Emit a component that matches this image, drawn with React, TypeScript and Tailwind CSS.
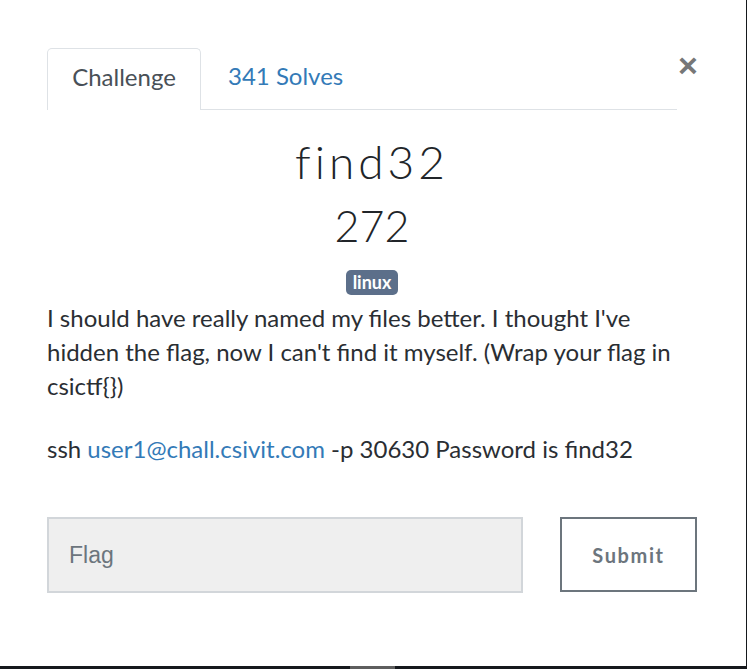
import React from "react";

export default function App() {
  return (
    <div className="w-[747px] h-[669px] bg-[#15181c] flex flex-col overflow-hidden" style={{ fontFamily: "Lato, 'Open Sans', sans-serif" }}>
      <div className="relative w-[746px] h-[666px] bg-white pl-[47px] pr-[49px] pt-[48px] text-[#212529]">
        <button className="absolute left-[678px] top-[50px] text-[34px] leading-[30px] font-bold text-[#777]" style={{ fontFamily: "'Liberation Sans', Arial, sans-serif" }}>
          ×
        </button>
        <div className="mr-[20px] flex border-b border-[#dee2e6] h-[62px]">
          <div className="w-[154px] h-[62px] pb-[6px] border border-b-0 border-[#dee2e6] rounded-t-[5px] bg-white flex items-center justify-center text-[24px] text-[#495057] -mb-px">
            Challenge
          </div>
          <div className="pl-[27px] pb-[6px] flex items-center text-[24px] text-[#337ab7]">341 Solves</div>
        </div>
        <div className="mt-[23px] h-[56px] flex items-center justify-center text-[46px] font-light tracking-[4px] text-[#212529]">
          find32
        </div>
        <div className="mt-[12px] h-[50px] flex items-center justify-center text-[43px] font-light text-[#212529]">272</div>
        <div className="mt-[19px] flex justify-center">
          <span className="h-[25px] px-[7px] rounded-[5px] bg-[#5c6f8a] text-white font-bold text-[18px] leading-[25px]">linux</span>
        </div>
        <p className="mt-[6px] text-[24px] leading-[34px] text-[#2a2e33]">
          I should have really named my files better. I thought I've hidden the flag, now I can't find it myself. (Wrap your flag in csictf{"{}"})
        </p>
        <p className="mt-[29px] text-[24px] leading-[34px] text-[#2a2e33]">
          ssh <span className="text-[#337ab7]">user1@chall.csivit.com</span> -p 30630 Password is find32
        </p>
        <div className="mt-[51px] flex justify-between">
          <div className="w-[476px] h-[76px] bg-[#efefef] border-2 border-[#d2d6da] flex items-center pl-[20px] text-[23px] text-[#6c757d]" style={{ fontFamily: "'Liberation Sans', Arial, sans-serif" }}>
            Flag
          </div>
          <div className="w-[137px] h-[75px] border-2 border-[#6c757d] flex items-center justify-center text-[20px] font-bold tracking-[1.6px] text-[#6c757d]">
            Submit
          </div>
        </div>
      </div>
      <div className="h-[3px] flex">
        <div className="ml-[350px] w-[45px] h-[3px] bg-[#5e5e5e]" />
      </div>
    </div>
  );
}
